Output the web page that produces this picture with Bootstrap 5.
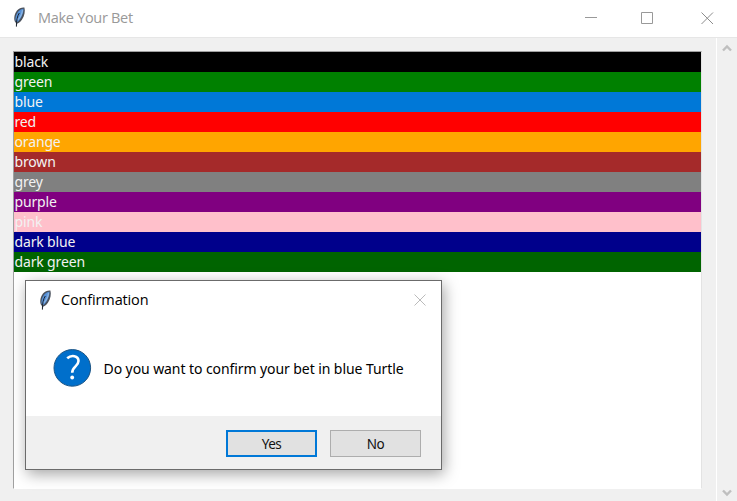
<!DOCTYPE html>
<html lang="en">
<head>
<meta charset="utf-8">
<meta name="viewport" content="width=device-width, initial-scale=1">
<title>Make Your Bet</title>
<link href="https://cdn.jsdelivr.net/npm/bootstrap@5.3.0/dist/css/bootstrap.min.css" rel="stylesheet">
<style>
body{font-family:"Noto Sans","Open Sans",sans-serif;background:#f0f0f0;height:501px}
svg{display:block;flex:none}
.titlebar{height:38px;border-bottom:1px solid #e6e6e6;padding-left:11px}
.app-icon{margin-top:-4px}
.win-title{font-family:"Open Sans","Noto Sans",sans-serif;font-size:14.5px;line-height:20px;color:#999;letter-spacing:-.3px;margin-left:11px;margin-top:-1px}
.win-controls{gap:40px;padding-right:23px;margin-top:-1px}
.client{padding:13px 14px 12px 13px}
.listbox{border:1px solid #a0a0a0;border-right-color:#e3e3e3;border-bottom-color:#fff;border-radius:0}
.listbox .list-group-item{height:20px;padding:0 0 0 .5px;border:0;border-radius:0;font-size:14px;line-height:20px;letter-spacing:-.15px;color:#f2f2f2;background:var(--row)}
.scroller{width:21px;border-left:1px solid #fff;padding:6px 6px 4px 5px}
.dialog-window{left:25px;top:280px;width:417px;height:190px;border:1px solid #6b6b6b;box-shadow:2px 4px 14px rgba(0,0,0,.36)}
.dialog-bar{height:37px;padding:0 15px 0 11px}
.dialog-title{font-family:"Open Sans","Noto Sans",sans-serif;font-size:14.5px;line-height:20px;letter-spacing:-.14px;margin-left:8px;margin-top:1px}
.dialog-message{height:98px;padding-left:27px}
.message-text{font-size:14px;line-height:20px;letter-spacing:-.08px;margin-left:11.5px;margin-top:3px}
.dialog-actions{background:#f0f0f0;padding:14px 20px 0;gap:13px}
.choice{width:91px;height:27px;padding:1px 0 0;border-radius:0;font-size:13.5px;line-height:20px;letter-spacing:-.5px;background:#e1e1e1;border:1px solid #adadad;color:#111}
.choice.chosen{border:2px solid #0078d7}
</style>
<script src="https://cdn.jsdelivr.net/npm/bootstrap@5.3.0/dist/js/bootstrap.bundle.min.js"></script>
</head>
<body class="d-flex flex-column overflow-hidden m-0">
<svg width="0" height="0" class="position-absolute">
<defs>
<symbol id="feather" viewBox="0 0 16 20">
<path d="M5.300 19.800 5.600 16.200C2.200 15 2.600 7.500 6 3.500 8 1.300 11 .2 13.400.6c1 3.400.2 8.400-2.500 12.100C9.400 14.800 7.900 16 6.400 16.400Z" fill="#4a515c"/>
<path d="M5 14.400C3.600 12.500 4.800 7.500 7.500 4.300 9 2.600 10.900 1.600 12.500 1.700 12.700 6 9.700 12.500 6.400 15Z" fill="#5691d8"/>
<path d="M6.500 13c3-2.500 4.500-6 5-9.800" stroke="#8fb6e2" stroke-width="1.200" fill="none"/>
<path d="M5.400 19.600C5.300 13.500 6.300 9 8.300 6" stroke="#1b222c" stroke-width="1" fill="none"/>
</symbol>
</defs>
</svg>
<header class="titlebar d-flex align-items-center bg-white flex-shrink-0">
<svg width="16" height="20" class="app-icon"><use href="#feather"/></svg>
<div class="win-title">Make Your Bet</div>
<div class="win-controls d-flex align-items-center ms-auto">
<svg width="12" height="12"><path d="M0 5.500h12" stroke="#999"/></svg>
<svg width="12" height="12" class="ms-1 me-1"><path d="M.5.500h11v11H.5z" fill="none" stroke="#999"/></svg>
<svg width="13" height="13" class="ms-1"><path d="M.5.500l11.500 11.500M12 .5l-11.500 11.500" stroke="#8c8c8c"/></svg>
</div>
</header>
<div class="d-flex flex-grow-1">
<main class="client d-flex flex-grow-1">
<ul class="listbox list-group bg-white flex-grow-1">
<li class="list-group-item" style="--row:#000">black</li>
<li class="list-group-item" style="--row:#008000">green</li>
<li class="list-group-item" style="--row:#0078d7">blue</li>
<li class="list-group-item" style="--row:#f00">red</li>
<li class="list-group-item" style="--row:#ffa500">orange</li>
<li class="list-group-item" style="--row:#a52a2a">brown</li>
<li class="list-group-item" style="--row:#808080">grey</li>
<li class="list-group-item" style="--row:#800080">purple</li>
<li class="list-group-item" style="--row:#ffc0cb">pink</li>
<li class="list-group-item" style="--row:#00008b">dark blue</li>
<li class="list-group-item" style="--row:#006400">dark green</li>
</ul>
</main>
<aside class="scroller d-flex flex-column justify-content-between">
<svg width="10" height="8"><path d="M1 6.500 5 2.500 9 6.500" fill="none" stroke="#bfbfbf" stroke-width="2.400"/></svg>
<svg width="10" height="8"><path d="M1 1.500 5 5.500 9 1.500" fill="none" stroke="#bfbfbf" stroke-width="2.400"/></svg>
</aside>
</div>
<section class="dialog-window position-absolute bg-white d-flex flex-column text-black" role="dialog">
<div class="dialog-bar d-flex align-items-center">
<svg width="16" height="20"><use href="#feather"/></svg>
<div class="dialog-title">Confirmation</div>
<svg class="ms-auto" width="12" height="12"><path d="M.5.500l11 11M11.500.500l-11 11" stroke="#bbb"/></svg>
</div>
<div class="dialog-message d-flex align-items-center">
<svg width="39" height="39" viewBox="0 0 39 39"><circle cx="19.300" cy="19.900" r="18.300" fill="#006fcb" stroke="#1b5485" stroke-width="1"/><path d="M14.200 10.300c4-3.600 11.300-3 11.300 2.700 0 5.300-6.300 5.600-6.300 11.700" fill="none" stroke="#fff" stroke-width="2.600"/><circle cx="19.200" cy="29.500" r="1.900" fill="#fff"/></svg>
<div class="message-text">Do you want to confirm your bet in blue Turtle</div>
</div>
<div class="dialog-actions d-flex justify-content-end align-items-start flex-grow-1">
<button class="choice chosen btn">Yes</button>
<button class="choice btn">No</button>
</div>
</section>
</body>
</html>
